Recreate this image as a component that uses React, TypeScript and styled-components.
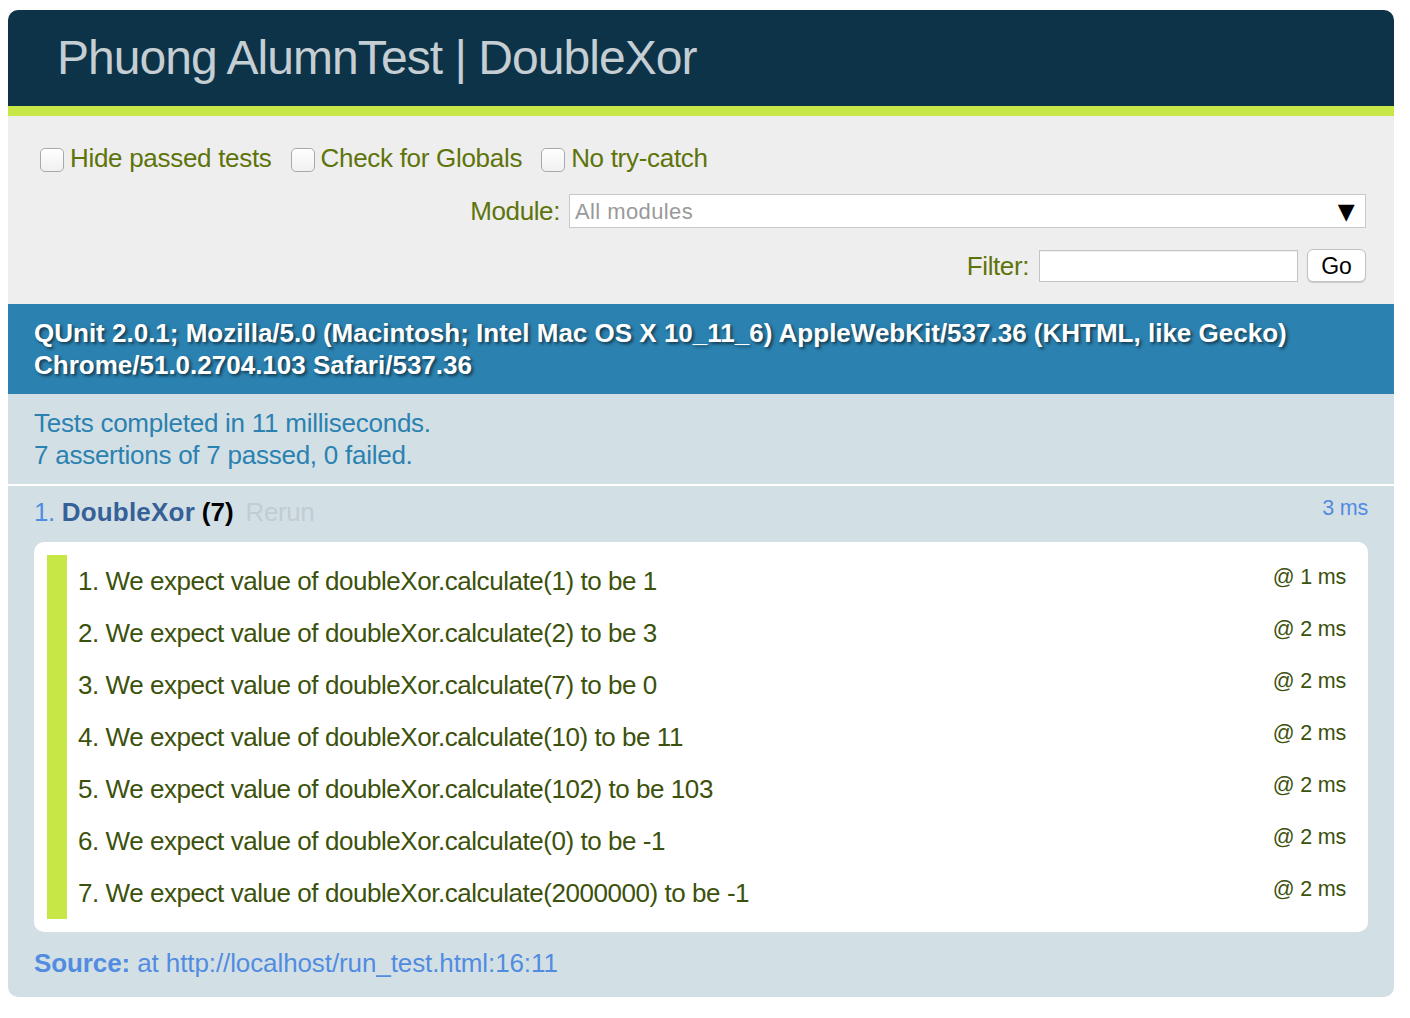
import React from "react";
import styled, { createGlobalStyle } from "styled-components";

const GlobalStyle = createGlobalStyle`
  html, body { background: #ffffff; }
  body {
    margin: 10px 16px 0 8px;
    font-family: "Liberation Sans", Arial, Helvetica, sans-serif;
  }
`;

const Page = styled.div`
  font-family: "Liberation Sans", Arial, Helvetica, sans-serif;
  font-size: 26px;
  line-height: 32px;
  letter-spacing: -0.4px;
`;

const Header = styled.h1`
  margin: 0;
  padding: 24px 0 24px 49px;
  font-size: 48px;
  line-height: 48px;
  font-weight: 400;
  letter-spacing: -0.95px;
  color: #c5ced3;
  background: #0d3349;
  border-radius: 10px 10px 0 0;
`;

const Banner = styled.div`
  height: 10px;
  background: #c6e746;
`;

const Toolbar = styled.div`
  display: flex;
  flex-direction: column;
  padding: 26px 28px 22px 26px;
  background: #eeeeee;
  color: #5e740b;
`;

const OptionRow = styled.div`
  display: flex;
  align-items: center;
  gap: 13px;
  height: 32px;
  letter-spacing: -0.3px;
`;

const OptionLabel = styled.label`
  display: flex;
  align-items: center;
`;

const Check = styled.input`
  appearance: none;
  width: 24px;
  height: 24px;
  margin: 4px 6px 0 6px;
  border: 1px solid #a9a9a9;
  border-radius: 5px;
  background: linear-gradient(#ffffff, #f0f0f0);
  box-shadow: inset 0 1px 1px rgba(255, 255, 255, 0.8);
`;

const FieldRow = styled.div<{ $top: number; $height: number }>`
  display: flex;
  justify-content: flex-end;
  align-items: center;
  margin-top: ${(p) => p.$top}px;
  height: ${(p) => p.$height}px;
`;

const FieldLabel = styled.span<{ $gap: number }>`
  margin-right: ${(p) => p.$gap}px;
`;

const SelectBox = styled.div`
  box-sizing: border-box;
  display: flex;
  align-items: center;
  justify-content: space-between;
  width: 797px;
  height: 34px;
  padding: 1px 10px 0 5px;
  background: #ffffff;
  border: 1px solid #c9c9c9;
  color: #9a9a9a;
  font-size: 22px;
  letter-spacing: 0.4px;
`;

const Arrow = styled.span`
  color: #000000;
  font-size: 22px;
  font-family: "DejaVu Sans", sans-serif;
`;

const TextInput = styled.input`
  box-sizing: border-box;
  width: 259px;
  height: 32px;
  margin: 0;
  border: 1px solid #c4c4c4;
  background: #ffffff;
  box-shadow: inset 0 1px 1px rgba(0, 0, 0, 0.06);
`;

const GoButton = styled.button`
  box-sizing: border-box;
  width: 59px;
  height: 33px;
  margin-left: 9px;
  padding: 2px 0 0;
  border: 1px solid #c2c2c2;
  border-radius: 6px;
  background: #ffffff;
  box-shadow: 0 1px 1px rgba(0, 0, 0, 0.15);
  font-family: "Liberation Sans", Arial, sans-serif;
  font-size: 23px;
  color: #000000;
`;

const UserAgent = styled.h2`
  margin: 0;
  padding: 13px 26px;
  background: #2b81af;
  color: #ffffff;
  font-size: 26px;
  line-height: 32px;
  font-weight: 700;
  letter-spacing: 0px;
  text-shadow: rgba(0, 0, 0, 0.55) 2px 2px 3px;
`;

const TestResult = styled.p`
  margin: 0;
  padding: 13px 26px;
  background: #d2e0e6;
  color: #2b81af;
  letter-spacing: -0.25px;
  border-bottom: 2px solid #ffffff;
`;

const TestList = styled.ol`
  margin: 0;
  padding: 0;
  list-style: none;
`;

const TestItem = styled.li`
  padding: 10px 26px 18px 26px;
  background: #d2e0e6;
  color: #528ce0;
  border-radius: 0 0 10px 10px;
`;

const TestHead = styled.div`
  display: flex;
  justify-content: space-between;
  align-items: flex-start;
`;

const TestName = styled.strong`
  color: #366097;
  letter-spacing: 0.2px;
`;

const Counts = styled.b`
  color: #000000;
  letter-spacing: 0px;
`;

const Rerun = styled.a`
  padding: 0 12px;
  color: #c2ccd1;
  text-decoration: none;
`;

const Runtime = styled.span<{ $color: string }>`
  font-size: 21.5px;
  line-height: 24px;
  letter-spacing: -0.2px;
  color: ${(p) => p.$color};
`;

const AssertList = styled.ol`
  margin: 14px 0 0 0;
  padding: 13px;
  list-style: none;
  background: #ffffff;
  border-radius: 10px;
`;

const AssertItem = styled.li`
  display: flex;
  justify-content: space-between;
  align-items: flex-start;
  padding: 10px 9px 10px 11px;
  border-left: 20px solid #c6e746;
  color: #3c510c;
  letter-spacing: -0.45px;
`;

const Source = styled.div`
  margin-top: 15px;
  color: #528ce0;
  letter-spacing: -0.1px;
`;

const assertions = [
  { text: "We expect value of doubleXor.calculate(1) to be 1", time: "@ 1 ms" },
  { text: "We expect value of doubleXor.calculate(2) to be 3", time: "@ 2 ms" },
  { text: "We expect value of doubleXor.calculate(7) to be 0", time: "@ 2 ms" },
  { text: "We expect value of doubleXor.calculate(10) to be 11", time: "@ 2 ms" },
  { text: "We expect value of doubleXor.calculate(102) to be 103", time: "@ 2 ms" },
  { text: "We expect value of doubleXor.calculate(0) to be -1", time: "@ 2 ms" },
  { text: "We expect value of doubleXor.calculate(2000000) to be -1", time: "@ 2 ms" },
];

export default function App() {
  return (
    <Page>
      <GlobalStyle />
      <Header>Phuong AlumnTest | DoubleXor</Header>
      <Banner />
      <Toolbar>
        <OptionRow>
          <OptionLabel>
            <Check type="checkbox" />
            Hide passed tests
          </OptionLabel>
          <OptionLabel>
            <Check type="checkbox" />
            Check for Globals
          </OptionLabel>
          <OptionLabel>
            <Check type="checkbox" />
            No try-catch
          </OptionLabel>
        </OptionRow>
        <FieldRow $top={20} $height={34}>
          <FieldLabel $gap={9}>Module:</FieldLabel>
          <SelectBox>
            <span>All modules</span>
            <Arrow>▼</Arrow>
          </SelectBox>
        </FieldRow>
        <FieldRow $top={21} $height={33}>
          <FieldLabel $gap={10}>Filter:</FieldLabel>
          <TextInput type="text" />
          <GoButton>Go</GoButton>
        </FieldRow>
      </Toolbar>
      <UserAgent>
        QUnit 2.0.1; Mozilla/5.0 (Macintosh; Intel Mac OS X 10_11_6) AppleWebKit/537.36 (KHTML, like Gecko)
        Chrome/51.0.2704.103 Safari/537.36
      </UserAgent>
      <TestResult>
        Tests completed in 11 milliseconds.
        <br />7 assertions of 7 passed, 0 failed.
      </TestResult>
      <TestList>
        <TestItem>
          <TestHead>
            <span>
              1. <TestName>DoubleXor</TestName> <Counts>(7)</Counts>
              <Rerun href="#">Rerun</Rerun>
            </span>
            <Runtime $color="#528ce0">3 ms</Runtime>
          </TestHead>
          <AssertList>
            {assertions.map((a, i) => (
              <AssertItem key={i}>
                <span>
                  {i + 1}. {a.text}
                </span>
                <Runtime $color="#3c510c">{a.time}</Runtime>
              </AssertItem>
            ))}
          </AssertList>
          <Source>
            <b>Source:</b> at http://localhost/run_test.html:16:11
          </Source>
        </TestItem>
      </TestList>
    </Page>
  );
}
